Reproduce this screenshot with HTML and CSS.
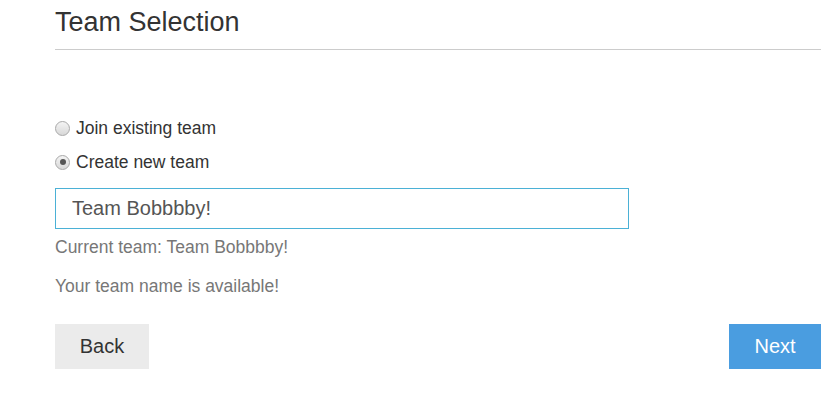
FILE: index.html
```html
<!DOCTYPE html>
<html lang="en">
<head>
<meta charset="utf-8">
<title>Team Selection</title>
<link rel="stylesheet" href="styles.css">
</head>
<body>
<div class="page">
  <header class="header">
    <h1 class="title">Team Selection</h1>
  </header>
  <form class="form">
    <div class="options">
      <label class="option"><input type="radio" name="team" class="radio"><span>Join existing team</span></label>
      <label class="option"><input type="radio" name="team" class="radio" checked><span>Create new team</span></label>
    </div>
    <input type="text" class="text-input" value="Team Bobbbby!">
    <p class="help current">Current team: Team Bobbbby!</p>
    <p class="help status">Your team name is available!</p>
    <div class="actions">
      <button type="button" class="btn btn-back">Back</button>
      <button type="button" class="btn btn-next">Next</button>
    </div>
  </form>
</div>
</body>
</html>
```
FILE: styles.css
```css
html, body {
  margin: 0;
  padding: 0;
  background: #fff;
}
body {
  font-family: "Liberation Sans", Arial, sans-serif;
  color: #333;
}
.page {
  margin-left: 55px;
  width: 766px;
}
.header {
  padding-top: 8px;
  padding-bottom: 12px;
  border-bottom: 1px solid #cccccc;
}
.title {
  margin: 0;
  font-size: 27px;
  line-height: 29px;
  font-weight: normal;
  color: #333;
}
.form {
  margin-top: 61px;
}
.options {
  display: flex;
  flex-direction: column;
}
.option {
  display: flex;
  align-items: center;
  gap: 6px;
  height: 34px;
  font-size: 17.5px;
  color: #333;
}
.radio {
  appearance: none;
  -webkit-appearance: none;
  margin: 0;
  width: 15px;
  height: 15px;
  border-radius: 50%;
  border: 1px solid #a9a9a9;
  background: linear-gradient(#f4f4f4, #d8d8d8);
  position: relative;
  flex: none;
}
.radio:checked::after {
  content: "";
  position: absolute;
  left: 3.5px;
  top: 3.5px;
  width: 6px;
  height: 6px;
  border-radius: 50%;
  background: #555;
}
.text-input {
  display: block;
  box-sizing: border-box;
  margin-top: 9px;
  width: 574px;
  height: 41px;
  padding: 0 16px;
  border: 1px solid #4bb1d6;
  font-family: "Liberation Sans", Arial, sans-serif;
  font-size: 20px;
  color: #555;
  outline: none;
}
.help {
  margin: 0;
  font-size: 17.5px;
  line-height: 24px;
  color: #777;
}
.current {
  margin-top: 6px;
}
.status {
  margin-top: 15px;
}
.actions {
  display: flex;
  justify-content: space-between;
  margin-top: 26px;
}
.btn {
  height: 45px;
  border: none;
  font-family: "Liberation Sans", Arial, sans-serif;
  font-size: 20px;
  padding: 0;
  cursor: pointer;
}
.btn-back {
  width: 94px;
  background: #ebebeb;
  color: #333;
}
.btn-next {
  width: 92px;
  background: #4a9de0;
  color: #fff;
}
```
